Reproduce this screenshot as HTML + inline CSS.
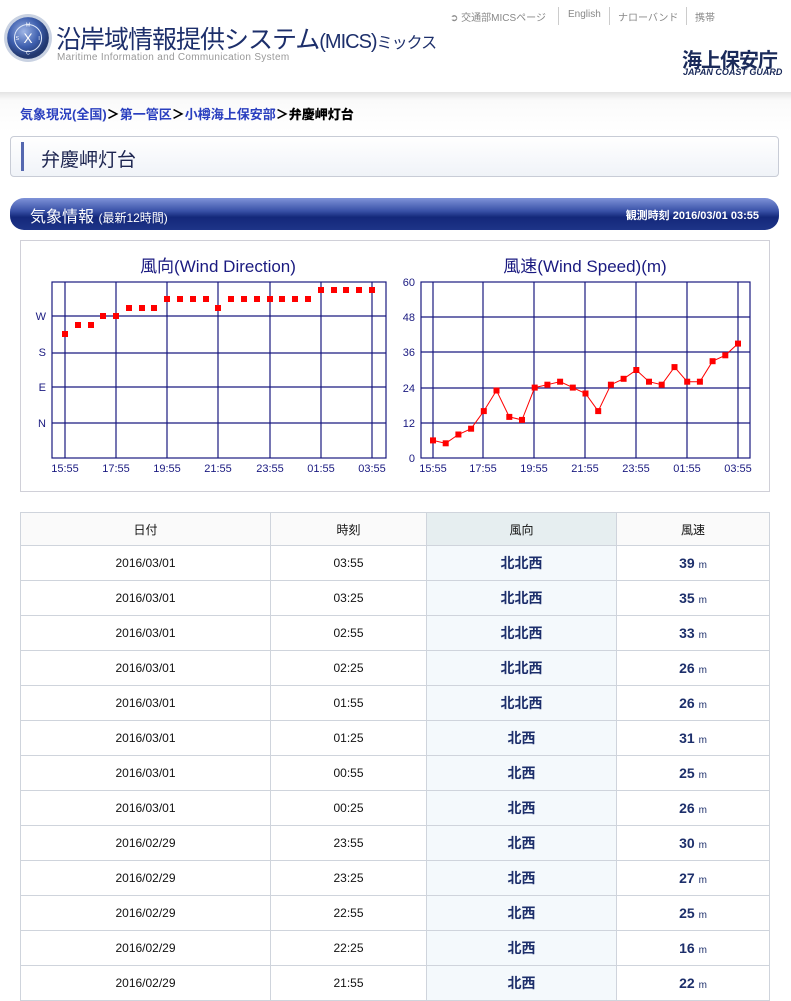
<!DOCTYPE html>
<html><head><meta charset="utf-8">
<style>
*{margin:0;padding:0;box-sizing:border-box}
body{width:791px;height:967px;overflow:hidden;background:#fff;font-family:"Liberation Sans","Noto Sans CJK JP",sans-serif;position:relative}
.abs{position:absolute}
.hdr{left:0;top:0;width:791px;height:92px;background:#fff}
.band{left:0;top:92px;width:791px;height:40px;background:linear-gradient(#e4e4e4,#fafafa 8px,#fff)}
.title{left:56px;top:20px;font-size:25px;color:#1d2f6b;letter-spacing:-1px;white-space:nowrap}
.sub{left:57px;top:52px;font-size:10px;color:#999;letter-spacing:.3px}
.top{top:9px;font-size:10px;color:#888;white-space:nowrap}
.sep{top:7px;width:1px;height:18px;background:#ccc}
.jcg{left:682px;top:44px;font-size:20px;font-weight:bold;color:#1a2a5a;letter-spacing:-1px}
.jcg2{left:683px;top:67px;font-size:9px;font-weight:bold;font-style:italic;color:#1a2a5a}
.bc{left:20px;top:104px;font-size:13px;font-weight:bold;color:#2a3fbf;white-space:nowrap}
.bc b{color:#000}
.tbox{left:10px;top:136px;width:769px;height:41px;border:1px solid #c8ccd6;border-radius:4px;background:linear-gradient(#fff,#f0f3f8)}
.tbox:before{content:"";position:absolute;left:10px;top:5px;width:3px;height:29px;background:#5568b0}
.tbox span{position:absolute;left:30px;top:8px;font-size:19px;color:#1d2550}
.bar{left:10px;top:198px;width:769px;height:32px;border-radius:14px;background:linear-gradient(#7f93d8 0%,#3a52a8 40%,#14287a 60%,#1e3488 100%);color:#fff}
.bar .l{position:absolute;left:20px;top:5px;font-size:16px}
.bar .l small{font-size:12px}
.bar .r{position:absolute;right:20px;top:9px;font-size:11px;font-weight:bold}
.chart{left:20px;top:240px;width:750px;height:252px;border:1px solid #d0d0d8}
table{position:absolute;left:20px;top:512px;width:750px;border-collapse:collapse;font-size:12px}
td,th{border:1px solid #cfd4dc;text-align:center;height:35px;padding:0;font-weight:normal;color:#111}
th{height:33px;background:#fafafa}
th.d{background:#e6eef0}
td.d{background:#f4f9fc;color:#1d2f6b;font-weight:bold;font-size:14px}
td.s{color:#1d2f6b;font-weight:bold;font-size:14px}
td.s small{font-size:10px;font-weight:normal}
</style></head><body>
<div class="abs hdr"></div>
<svg class="abs" style="left:3px;top:13px" width="50" height="50" viewBox="0 0 48 48">
<defs><radialGradient id="g" cx="40%" cy="35%" r="60%"><stop offset="0" stop-color="#9fb6e6"/><stop offset=".6" stop-color="#3e5fae"/><stop offset="1" stop-color="#22386f"/></radialGradient></defs>
<circle cx="24" cy="24" r="23" fill="#c9d2e2"/><circle cx="24" cy="24" r="20" fill="url(#g)"/>
<circle cx="24" cy="24" r="13" fill="none" stroke="#dce6f8" stroke-width="1"/>
<text x="24" y="29" font-size="13" fill="#fff" text-anchor="middle" font-family="Liberation Sans">X</text>
<text x="24" y="13" font-size="5" fill="#fff" text-anchor="middle">M</text>
<text x="12" y="26" font-size="5" fill="#fff">S</text><text x="34" y="26" font-size="5" fill="#fff">I</text>
<text x="24" y="40" font-size="5" fill="#fff" text-anchor="middle">C</text>
</svg>
<div class="abs title">沿岸域情報提供システム<span style="font-size:20px">(MICS)</span><span style="font-size:16px">ミックス</span></div>
<div class="abs sub">Maritime Information and Communication System</div>
<div class="abs top" style="left:450px">➲ 交通部MICSページ</div>
<div class="abs sep" style="left:558px"></div>
<div class="abs top" style="left:568px">English</div>
<div class="abs sep" style="left:609px"></div>
<div class="abs top" style="left:618px">ナローバンド</div>
<div class="abs sep" style="left:686px"></div>
<div class="abs top" style="left:695px">携帯</div>
<div class="abs jcg">海上保安庁</div>
<div class="abs jcg2">JAPAN COAST GUARD</div>
<div class="abs band"></div>
<div class="abs bc">気象現況(全国)<b>＞</b>第一管区<b>＞</b>小樽海上保安部<b>＞弁慶岬灯台</b></div>
<div class="abs tbox"><span>弁慶岬灯台</span></div>
<div class="abs bar"><span class="l">気象情報 <small>(最新12時間)</small></span><span class="r">観測時刻 2016/03/01 03:55</span></div>
<div class="abs chart"></div>
<svg class="abs" style="left:0;top:0" width="791" height="500" font-family="Liberation Sans,sans-serif">
<g fill="#1a1a80" font-size="17" text-anchor="middle">
<text x="218" y="272">風向(Wind Direction)</text>
<text x="585" y="272">風速(Wind Speed)(m)</text>
</g>
<g stroke="#1a1a80" stroke-width="1.2" fill="none">
<rect x="52" y="282" width="334" height="176"/>
<path d="M65 282V458M116 282V458M167 282V458M218 282V458M270 282V458M321 282V458M372 282V458M52 316H386M52 353H386M52 387H386M52 423H386"/>
<rect x="421" y="282" width="329" height="176"/>
<path d="M433 282V458M483 282V458M534 282V458M585 282V458M636 282V458M687 282V458M738 282V458M421 317H750M421 352H750M421 388H750M421 423H750"/>
</g>
<g fill="#1a1a80" font-size="11">
<g text-anchor="end"><text x="46" y="320">W</text><text x="46" y="356">S</text><text x="46" y="391">E</text><text x="46" y="427">N</text>
<text x="415" y="286">60</text><text x="415" y="321">48</text><text x="415" y="356">36</text><text x="415" y="392">24</text><text x="415" y="427">12</text><text x="415" y="462">0</text></g>
<g text-anchor="middle">
<text x="65" y="472">15:55</text><text x="116" y="472">17:55</text><text x="167" y="472">19:55</text><text x="218" y="472">21:55</text><text x="270" y="472">23:55</text><text x="321" y="472">01:55</text><text x="372" y="472">03:55</text>
<text x="433" y="472">15:55</text><text x="483" y="472">17:55</text><text x="534" y="472">19:55</text><text x="585" y="472">21:55</text><text x="636" y="472">23:55</text><text x="687" y="472">01:55</text><text x="738" y="472">03:55</text></g>
</g>
<g fill="#f00">
<rect x="62" y="331" width="6" height="6"/><rect x="75" y="322" width="6" height="6"/><rect x="88" y="322" width="6" height="6"/><rect x="100" y="313" width="6" height="6"/><rect x="113" y="313" width="6" height="6"/><rect x="126" y="305" width="6" height="6"/><rect x="139" y="305" width="6" height="6"/><rect x="151" y="305" width="6" height="6"/><rect x="164" y="296" width="6" height="6"/><rect x="177" y="296" width="6" height="6"/><rect x="190" y="296" width="6" height="6"/><rect x="203" y="296" width="6" height="6"/><rect x="215" y="305" width="6" height="6"/><rect x="228" y="296" width="6" height="6"/><rect x="241" y="296" width="6" height="6"/><rect x="254" y="296" width="6" height="6"/><rect x="267" y="296" width="6" height="6"/><rect x="279" y="296" width="6" height="6"/><rect x="292" y="296" width="6" height="6"/><rect x="305" y="296" width="6" height="6"/><rect x="318" y="287" width="6" height="6"/><rect x="331" y="287" width="6" height="6"/><rect x="343" y="287" width="6" height="6"/><rect x="356" y="287" width="6" height="6"/><rect x="369" y="287" width="6" height="6"/>
</g>
<polyline fill="none" stroke="#f00" stroke-width="1" points="433,440.4 445.7,443.3 458.4,434.5 471.1,428.7 483.8,411.1 496.5,390.5 509.3,416.9 522,419.9 534.7,387.6 547.4,384.7 560.1,381.7 572.8,387.6 585.5,393.5 598.2,411.1 610.9,384.7 623.6,378.8 636.3,370 649,381.7 661.7,384.7 674.5,367.1 687.2,381.7 699.9,381.7 712.6,361.2 725.3,355.3 738,343.6"/>
<g fill="#f00">
<rect x="430" y="437.4" width="6" height="6"/><rect x="442.7" y="440.3" width="6" height="6"/><rect x="455.4" y="431.5" width="6" height="6"/><rect x="468.1" y="425.7" width="6" height="6"/><rect x="480.8" y="408.1" width="6" height="6"/><rect x="493.5" y="387.5" width="6" height="6"/><rect x="506.3" y="413.9" width="6" height="6"/><rect x="519" y="416.9" width="6" height="6"/><rect x="531.7" y="384.6" width="6" height="6"/><rect x="544.4" y="381.7" width="6" height="6"/><rect x="557.1" y="378.7" width="6" height="6"/><rect x="569.8" y="384.6" width="6" height="6"/><rect x="582.5" y="390.5" width="6" height="6"/><rect x="595.2" y="408.1" width="6" height="6"/><rect x="607.9" y="381.7" width="6" height="6"/><rect x="620.6" y="375.8" width="6" height="6"/><rect x="633.3" y="367" width="6" height="6"/><rect x="646" y="378.7" width="6" height="6"/><rect x="658.7" y="381.7" width="6" height="6"/><rect x="671.5" y="364.1" width="6" height="6"/><rect x="684.2" y="378.7" width="6" height="6"/><rect x="696.9" y="378.7" width="6" height="6"/><rect x="709.6" y="358.2" width="6" height="6"/><rect x="722.3" y="352.3" width="6" height="6"/><rect x="735" y="340.6" width="6" height="6"/>
</g>
</svg>
<table>
<tr><th style="width:250px">日付</th><th style="width:156px">時刻</th><th class="d" style="width:190px">風向</th><th>風速</th></tr>
<tr><td>2016/03/01</td><td>03:55</td><td class="d">北北西</td><td class="s">39 <small>m</small></td></tr>
<tr><td>2016/03/01</td><td>03:25</td><td class="d">北北西</td><td class="s">35 <small>m</small></td></tr>
<tr><td>2016/03/01</td><td>02:55</td><td class="d">北北西</td><td class="s">33 <small>m</small></td></tr>
<tr><td>2016/03/01</td><td>02:25</td><td class="d">北北西</td><td class="s">26 <small>m</small></td></tr>
<tr><td>2016/03/01</td><td>01:55</td><td class="d">北北西</td><td class="s">26 <small>m</small></td></tr>
<tr><td>2016/03/01</td><td>01:25</td><td class="d">北西</td><td class="s">31 <small>m</small></td></tr>
<tr><td>2016/03/01</td><td>00:55</td><td class="d">北西</td><td class="s">25 <small>m</small></td></tr>
<tr><td>2016/03/01</td><td>00:25</td><td class="d">北西</td><td class="s">26 <small>m</small></td></tr>
<tr><td>2016/02/29</td><td>23:55</td><td class="d">北西</td><td class="s">30 <small>m</small></td></tr>
<tr><td>2016/02/29</td><td>23:25</td><td class="d">北西</td><td class="s">27 <small>m</small></td></tr>
<tr><td>2016/02/29</td><td>22:55</td><td class="d">北西</td><td class="s">25 <small>m</small></td></tr>
<tr><td>2016/02/29</td><td>22:25</td><td class="d">北西</td><td class="s">16 <small>m</small></td></tr>
<tr><td>2016/02/29</td><td>21:55</td><td class="d">北西</td><td class="s">22 <small>m</small></td></tr>
</table>
</body></html>
